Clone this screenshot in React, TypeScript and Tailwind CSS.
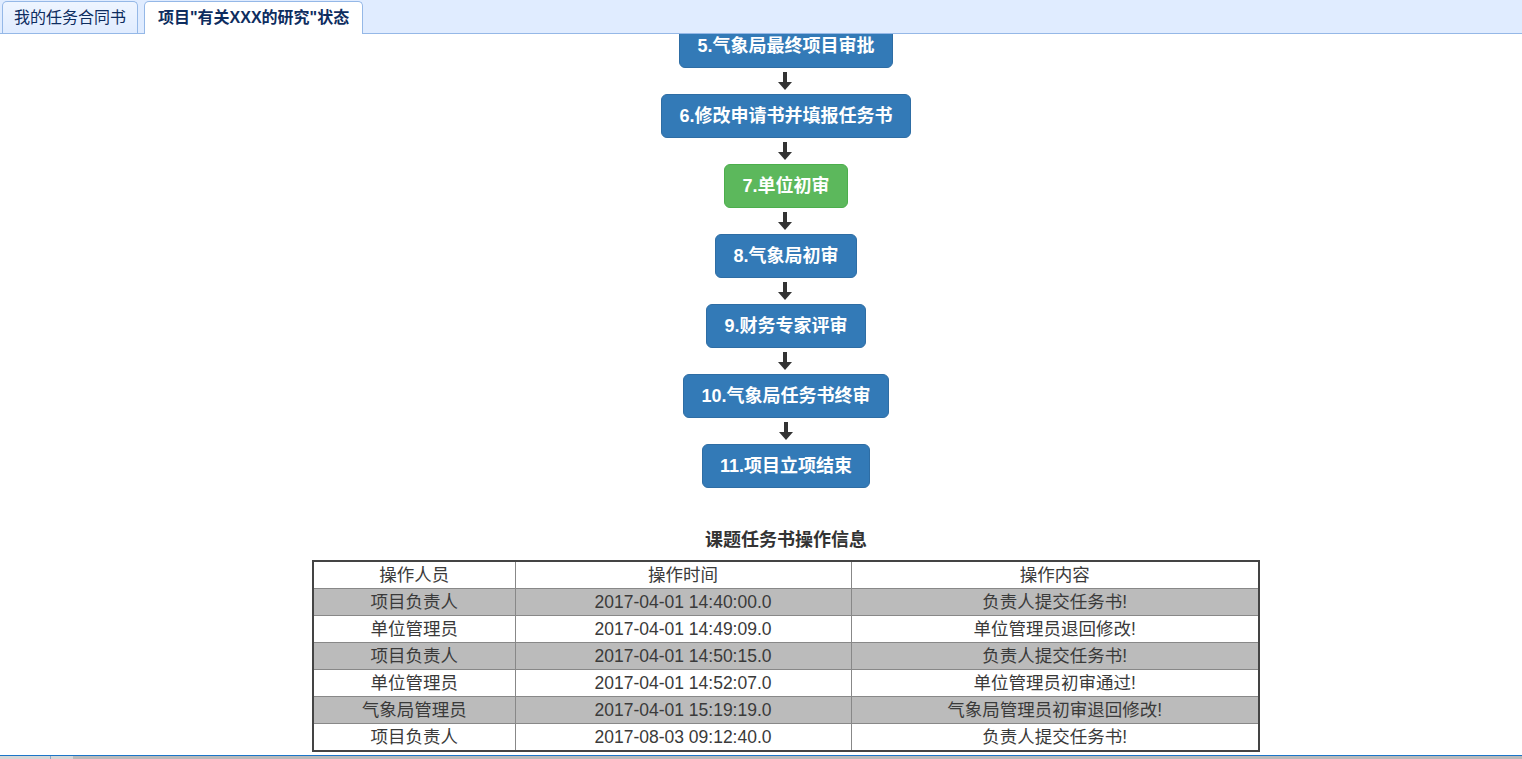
const steps = [
  { label: '5.气象局最终项目审批', done: false },
  { label: '6.修改申请书并填报任务书', done: false },
  { label: '7.单位初审', done: true },
  { label: '8.气象局初审', done: false },
  { label: '9.财务专家评审', done: false },
  { label: '10.气象局任务书终审', done: false },
  { label: '11.项目立项结束', done: false },
];

const logs = [
  ['项目负责人', '2017-04-01 14:40:00.0', '负责人提交任务书!'],
  ['单位管理员', '2017-04-01 14:49:09.0', '单位管理员退回修改!'],
  ['项目负责人', '2017-04-01 14:50:15.0', '负责人提交任务书!'],
  ['单位管理员', '2017-04-01 14:52:07.0', '单位管理员初审通过!'],
  ['气象局管理员', '2017-04-01 15:19:19.0', '气象局管理员初审退回修改!'],
  ['项目负责人', '2017-08-03 09:12:40.0', '负责人提交任务书!'],
];

function Arrow() {
  return (
    <div className="h-[26px] flex items-center justify-center">
      <svg width="14" height="18" viewBox="0 0 14 18" className="-ml-px">
        <path d="M5 0h4v10h5l-7 8-7-8h5z" fill="#333" />
      </svg>
    </div>
  );
}

export default function App() {
  return (
    <div
      className="h-screen flex flex-col bg-white overflow-hidden"
      style={{ fontFamily: '"Liberation Sans", "Noto Sans CJK SC", sans-serif' }}
    >
      {/* tabs */}
      <div className="h-[34px] shrink-0 bg-[#e0ecff] border-b border-[#95b8e7] flex items-end pl-[2px] gap-[6px]">
        <div className="h-[32px] px-[11px] flex items-center rounded-t-[5px] border border-b-0 border-[#95b8e7] bg-gradient-to-b from-[#eff5ff] to-[#e0ecff] text-[16px] text-[#0e2d5f]">
          我的任务合同书
        </div>
        <div className="h-[33px] -mb-px px-[13px] flex items-center rounded-t-[5px] border border-b-0 border-[#95b8e7] bg-white text-[16px] font-bold text-[#0e2d5f]">
          项目"有关XXX的研究"状态
        </div>
      </div>

      {/* content */}
      <div className="flex-1 overflow-hidden pl-[50px]">
        <div className="-mt-[10px] flex flex-col items-center">
          {steps.map((s, i) => (
            <div key={s.label} className="flex flex-col items-center">
              <div
                className={
                  'h-[44px] px-[17px] flex items-center rounded-[6px] border text-[18px] font-bold text-white ' +
                  (s.done ? 'bg-[#5cb85c] border-[#4cae4c]' : 'bg-[#337ab7] border-[#2e6da4]')
                }
              >
                {s.label}
              </div>
              {i < steps.length - 1 && <Arrow />}
            </div>
          ))}

          <div className="mt-[40px] mb-[8px] text-[18px] leading-[24px] font-bold text-[#333]">课题任务书操作信息</div>

          <table className="w-[948px] border-collapse border-2 border-[#444] text-[17.5px] text-[#3a3a3a] text-center">
            <colgroup>
              <col className="w-[202px]" />
              <col className="w-[336px]" />
              <col />
            </colgroup>
            <tbody>
              <tr className="h-[27px] bg-white">
                <td className="border border-[#888] p-0 leading-[26px]">操作人员</td>
                <td className="border border-[#888] p-0 leading-[26px]">操作时间</td>
                <td className="border border-[#888] p-0 leading-[26px]">操作内容</td>
              </tr>
              {logs.map((r, i) => (
                <tr key={i} className={'h-[27px] ' + (i % 2 === 0 ? 'bg-[#bbbbbb]' : 'bg-white')}>
                  {r.map((c, j) => (
                    <td key={j} className="border border-[#888] p-0 leading-[26px]">
                      {c}
                    </td>
                  ))}
                </tr>
              ))}
            </tbody>
          </table>
        </div>
      </div>

      {/* bottom frame edge */}
      <div className="h-px shrink-0 bg-[#1b75c8]" />
      <div className="h-[3px] shrink-0 flex bg-[#b9b9b9]">
        <div className="w-[50px] bg-[#d6d6d6]" />
        <div className="w-px bg-[#8aa6c8]" />
        <div className="w-[22px] bg-[#d6d6d6]" />
      </div>
    </div>
  );
}
